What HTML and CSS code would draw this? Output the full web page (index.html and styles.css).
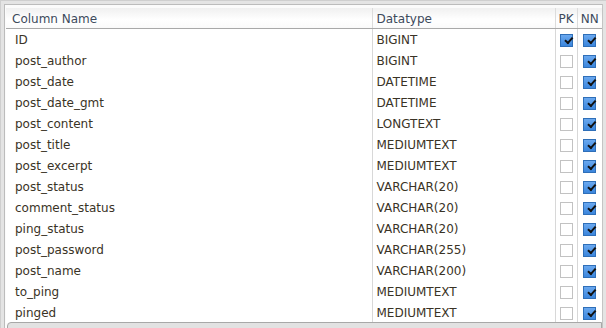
FILE: index.html
```html
<!DOCTYPE html>
<html lang="en">
<head>
  <meta charset="UTF-8" />
  <title>Columns</title>
  <link rel="stylesheet" href="styles.css">
</head>
<body>
  <div class="frame">
    <div class="inner">
      <table class="cols">
        <colgroup>
          <col class="c-name"><col class="c-type"><col class="c-pk"><col class="c-nn">
        </colgroup>
        <thead>
          <tr><th>Column Name</th><th>Datatype</th><th class="ck">PK</th><th class="ck">NN</th></tr>
        </thead>
        <tbody>
          <tr><td>ID</td><td>BIGINT</td><td class="ck"><span class="box on"></span></td><td class="ck"><span class="box on"></span></td></tr>
          <tr><td>post_author</td><td>BIGINT</td><td class="ck"><span class="box"></span></td><td class="ck"><span class="box on"></span></td></tr>
          <tr><td>post_date</td><td>DATETIME</td><td class="ck"><span class="box"></span></td><td class="ck"><span class="box on"></span></td></tr>
          <tr><td>post_date_gmt</td><td>DATETIME</td><td class="ck"><span class="box"></span></td><td class="ck"><span class="box on"></span></td></tr>
          <tr><td>post_content</td><td>LONGTEXT</td><td class="ck"><span class="box"></span></td><td class="ck"><span class="box on"></span></td></tr>
          <tr><td>post_title</td><td>MEDIUMTEXT</td><td class="ck"><span class="box"></span></td><td class="ck"><span class="box on"></span></td></tr>
          <tr><td>post_excerpt</td><td>MEDIUMTEXT</td><td class="ck"><span class="box"></span></td><td class="ck"><span class="box on"></span></td></tr>
          <tr><td>post_status</td><td>VARCHAR(20)</td><td class="ck"><span class="box"></span></td><td class="ck"><span class="box on"></span></td></tr>
          <tr><td>comment_status</td><td>VARCHAR(20)</td><td class="ck"><span class="box"></span></td><td class="ck"><span class="box on"></span></td></tr>
          <tr><td>ping_status</td><td>VARCHAR(20)</td><td class="ck"><span class="box"></span></td><td class="ck"><span class="box on"></span></td></tr>
          <tr><td>post_password</td><td>VARCHAR(255)</td><td class="ck"><span class="box"></span></td><td class="ck"><span class="box on"></span></td></tr>
          <tr><td>post_name</td><td>VARCHAR(200)</td><td class="ck"><span class="box"></span></td><td class="ck"><span class="box on"></span></td></tr>
          <tr><td>to_ping</td><td>MEDIUMTEXT</td><td class="ck"><span class="box"></span></td><td class="ck"><span class="box on"></span></td></tr>
          <tr><td>pinged</td><td>MEDIUMTEXT</td><td class="ck"><span class="box"></span></td><td class="ck"><span class="box on"></span></td></tr>
        </tbody>
      </table>
      <div class="hscroll"></div>
    </div>
  </div>
</body>
</html>
```
FILE: styles.css
```css
html, body {
  margin: 0;
  height: 100%;
  overflow: hidden;
  background: #d9d9d9;
}
body {
  font-family: "DejaVu Sans", sans-serif;
  font-size: 12px;
  color: #3a3326;
}
.frame {
  height: 100%;
  box-sizing: border-box;
  padding: 3px 0 0 3px;
  background: #e4e4e4;
  border-top: 1px solid #cfcfcf;
  border-left: 1px solid #cfcfcf;
}
.inner {
  position: relative;
  height: 100%;
  box-sizing: border-box;
  margin-right: 3px;
  border-top: 1px solid #bcbcbc;
  border-left: 1px solid #bcbcbc;
  border-right: 1px solid #c4c4c4;
  padding: 3px 0 0 1px;
  background: #fbfbfb;
  overflow: hidden;
}
.cols {
  width: 100%;
  border-collapse: collapse;
  table-layout: fixed;
  background: #fff;
}
.c-name { width: 366px; }
.c-type { width: 183px; }
.c-pk { width: 22px; }
.c-nn { width: 25px; }
.cols th {
  height: 19px;
  padding: 1px 0 0 4px;
  text-align: left;
  font-weight: normal;
  color: #3d4a5c;
  background: linear-gradient(#f0f0f0, #ffffff 60%, #fafafa);
  border-bottom: 1px solid #a9a9a9;
  border-left: 1px solid #dcdcdc;
}
.cols th:first-child { border-left: none; padding-left: 6px; }
.cols td {
  height: 21px;
  padding: 0 0 0 4px;
  border-left: 1px solid #d8d8d8;
  white-space: nowrap;
}
.cols td:first-child { border-left: none; padding-left: 9px; }
.cols th.ck { padding: 1px 0 0 0; text-align: center; }
.cols td.ck { padding: 0; text-align: center; }
.box {
  display: inline-block;
  width: 11px;
  height: 11px;
  border: 1px solid #c2c2c2;
  background: #fff;
  vertical-align: middle;
  position: relative;
}
.box.on {
  border-color: #2f6fb8;
  background: linear-gradient(#6aa8ef, #3b86dd);
}
.box.on::after {
  content: "";
  position: absolute;
  left: 3px;
  top: 0px;
  width: 6px;
  height: 3px;
  border-left: 2px solid #111;
  border-bottom: 2px solid #111;
  transform: rotate(-48deg) translate(-1px, 2px);
}
.hscroll {
  position: absolute;
  left: 2px;
  right: 0;
  bottom: -4px;
  height: 8px;
  border: 1px solid #a8a8a8;
  border-radius: 4px 0 0 0;
  background: #e2e2e2;
}
```
